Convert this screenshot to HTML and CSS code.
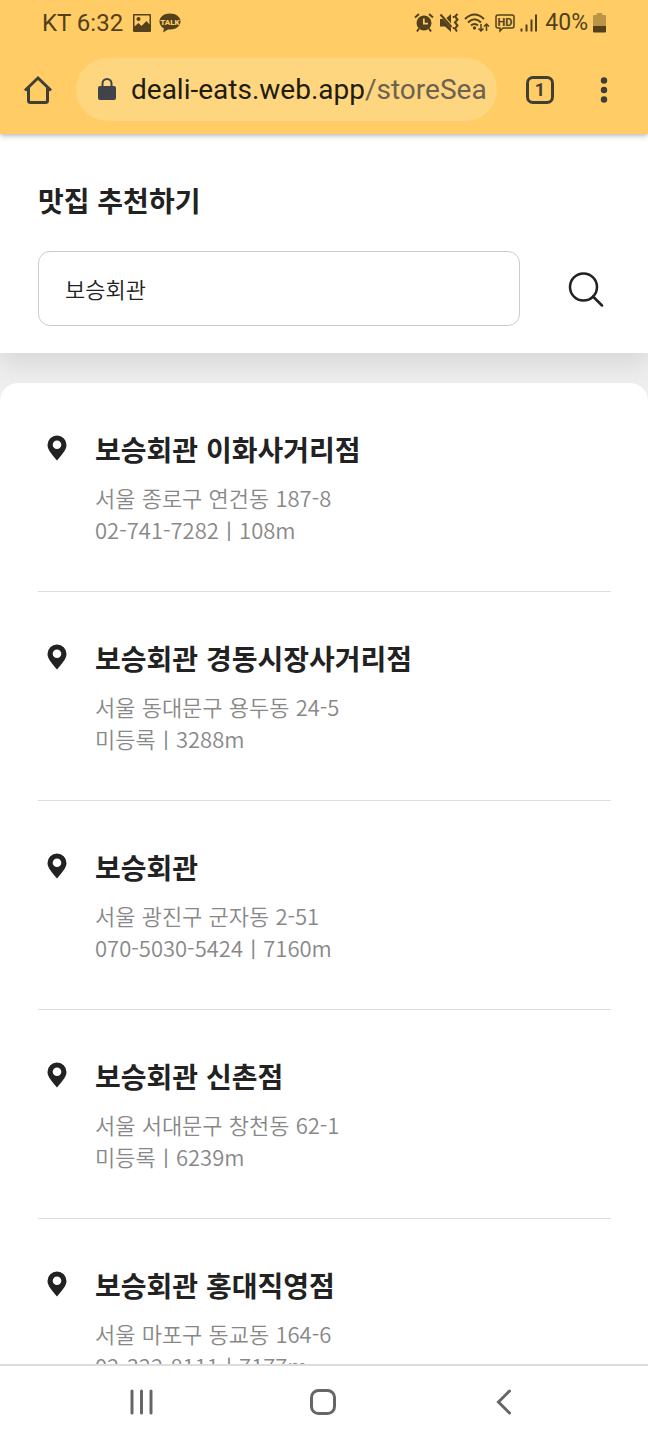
FILE: index.html
```html
<!DOCTYPE html>
<html lang="ko">
<head>
    <meta charset="UTF-8">
    <meta name="viewport" content="width=device-width, initial-scale=1.0">
    <title>맛집 추천하기</title>
    <link rel="stylesheet" href="styles.css">
</head>
<body>
<div class="screen">
    <div class="browser">
        <div class="status">
            <span class="clock">KT 6:32</span>
            <svg class="picture" width="20" height="20" viewBox="0 0 20 20">
                <path fill-rule="evenodd" d="M2 1h16a1 1 0 0 1 1 1v16a1 1 0 0 1-1 1H2a1 1 0 0 1-1-1V2a1 1 0 0 1 1-1zM2.500 2.500v11l4-3.500 3 3 5-5 3 3.500V2.500z"/>
                <circle cx="6.500" cy="6" r="2"/>
            </svg>
            <svg class="talk" width="22" height="20" viewBox="0 0 22 20">
                <path d="M11 0.500C5 0.500 0.500 4 0.500 8.500c0 3 1.800 5.500 4.500 6.900L4 19.500l5-3h2c6 0 10.500-3.500 10.500-8S17 0.500 11 0.500z"/>
                <text x="11" y="12" text-anchor="middle">TALK</text>
            </svg>
            <div class="status-right">
                <svg width="20" height="20" viewBox="0 0 20 20">
                    <path fill-rule="evenodd" d="M10 2.500a7.500 7.500 0 1 1 0 15a7.500 7.500 0 1 1 0-15zM9 5.500v6h5V9.800h-3.300V5.500z"/>
                    <path class="line" d="M1 4.500L5 1M19 4.500L15 1M5 15.500l-2 3M15 15.500l2 3"/>
                </svg>
                <svg width="20" height="20" viewBox="0 0 20 20">
                    <path d="M1 6h3l8 9v4l-6-5.500H1z"/>
                    <path d="M7.500 5L12 1v9.500z"/>
                    <path class="line" d="M1.500 1.500L12.500 14"/>
                    <path class="line" d="M18.500 1l-2.500 2.500 2.500 3-2.500 3 2.500 3-2.500 3 2 3"/>
                    <path class="thin" d="M14.500 3v2M14.500 14v2"/>
                </svg>
                <svg width="26" height="20" viewBox="0 0 26 20">
                    <path class="line" d="M1 6Q10.500-3 20 6M4 9.500Q10.500 3 17 9.500M7 12.500Q10.500 9.500 14 12.500"/>
                    <circle cx="10.500" cy="15" r="1.700"/>
                    <path class="thin" d="M17 11v7M14.500 15.500l2.500 2.500 2.500-2.500M22.500 18v-7M20 13.500l2.500-2.500 2.500 2.500"/>
                </svg>
                <svg class="hd" width="20" height="20" viewBox="0 0 20 20">
                    <path class="thin" d="M3 2h14q2 0 2 2v9q0 2-2 2H8l-3 3v-3H3q-2 0-2-2V4q0-2 2-2z"/>
                    <text x="10" y="13" text-anchor="middle">HD</text>
                </svg>
                <svg width="18" height="20" viewBox="0 0 18 20">
                    <path d="M0.500 15.500h2v3h-2zM5.500 11.500h2v7h-2zM10.500 6.500h2v12h-2zM15 1.500h2v17h-2z"/>
                </svg>
                <span class="percent">40%</span>
                <svg width="13" height="20" viewBox="0 0 14 20" preserveAspectRatio="none">
                    <path opacity="0.4" d="M4 0h6v2h3q1 0 1 1v10H0V3q0-1 1-1h3z"/>
                    <path d="M0 13h14v5.500q0 1-1 1H1q-1 0-1-1z"/>
                </svg>
            </div>
        </div>
        <div class="toolbar">
            <button class="home" aria-label="홈">
                <svg width="30" height="30" viewBox="0 0 30 30">
                    <path class="bold" d="M2 15.500L15 3 28 15.500M5.500 13v12.500q0 2 2 2h15q2 0 2-2V13"/>
                </svg>
            </button>
            <div class="address">
                <svg width="18" height="24" viewBox="0 0 18 24">
                    <rect x="0" y="8" width="18" height="14" rx="2"/>
                    <path class="lockline" d="M4.500 9V5.500a4.500 4.500 0 0 1 9 0v3.500"/>
                </svg>
                <span class="url">deali-eats.web.app<span class="path">/storeSea</span></span>
            </div>
            <button class="tabs" aria-label="탭"><span>1</span></button>
            <button class="menu" aria-label="메뉴">
                <svg width="8" height="28" viewBox="0 0 8 28">
                    <circle cx="4" cy="4.500" r="3.200"/>
                    <circle cx="4" cy="14" r="3.200"/>
                    <circle cx="4" cy="23.500" r="3.200"/>
                </svg>
            </button>
        </div>
    </div>

    <div class="content">
        <form class="search">
            <h1><label for="keyword">맛집 추천하기</label></h1>
            <div class="search-row">
                <input type="text" id="keyword" value="보승회관">
                <button type="button" aria-label="검색">
                    <svg width="36" height="36" viewBox="0 0 36 36">
                        <circle cx="15.500" cy="16" r="13.500"/>
                        <path d="M25 25.500l9 9"/>
                    </svg>
                </button>
            </div>
        </form>

        <ul class="stores">
            <li>
                <svg class="pin" viewBox="0 0 20 26"><path fill-rule="evenodd" d="M10 0.500a9.500 9.500 0 0 1 9.500 9.500c0 5-5 10-9.500 15.500C5.500 20 0.500 15 0.500 10A9.500 9.500 0 0 1 10 0.500zM10 5.500a4.300 4.300 0 1 0 0 8.600a4.300 4.300 0 1 0 0-8.600z"/></svg>
                <div>
                    <h2>보승회관 이화사거리점</h2>
                    <p>서울 종로구 연건동 187-8</p>
                    <p>02-741-7282ㅣ108m</p>
                </div>
            </li>
            <li>
                <svg class="pin" viewBox="0 0 20 26"><path fill-rule="evenodd" d="M10 0.500a9.500 9.500 0 0 1 9.500 9.500c0 5-5 10-9.500 15.500C5.500 20 0.500 15 0.500 10A9.500 9.500 0 0 1 10 0.500zM10 5.500a4.300 4.300 0 1 0 0 8.600a4.300 4.300 0 1 0 0-8.600z"/></svg>
                <div>
                    <h2>보승회관 경동시장사거리점</h2>
                    <p>서울 동대문구 용두동 24-5</p>
                    <p>미등록ㅣ3288m</p>
                </div>
            </li>
            <li>
                <svg class="pin" viewBox="0 0 20 26"><path fill-rule="evenodd" d="M10 0.500a9.500 9.500 0 0 1 9.500 9.500c0 5-5 10-9.500 15.500C5.500 20 0.500 15 0.500 10A9.500 9.500 0 0 1 10 0.500zM10 5.500a4.300 4.300 0 1 0 0 8.600a4.300 4.300 0 1 0 0-8.600z"/></svg>
                <div>
                    <h2>보승회관</h2>
                    <p>서울 광진구 군자동 2-51</p>
                    <p>070-5030-5424ㅣ7160m</p>
                </div>
            </li>
            <li>
                <svg class="pin" viewBox="0 0 20 26"><path fill-rule="evenodd" d="M10 0.500a9.500 9.500 0 0 1 9.500 9.500c0 5-5 10-9.500 15.500C5.500 20 0.500 15 0.500 10A9.500 9.500 0 0 1 10 0.500zM10 5.500a4.300 4.300 0 1 0 0 8.600a4.300 4.300 0 1 0 0-8.600z"/></svg>
                <div>
                    <h2>보승회관 신촌점</h2>
                    <p>서울 서대문구 창천동 62-1</p>
                    <p>미등록ㅣ6239m</p>
                </div>
            </li>
            <li>
                <svg class="pin" viewBox="0 0 20 26"><path fill-rule="evenodd" d="M10 0.500a9.500 9.500 0 0 1 9.500 9.500c0 5-5 10-9.500 15.500C5.500 20 0.500 15 0.500 10A9.500 9.500 0 0 1 10 0.500zM10 5.500a4.300 4.300 0 1 0 0 8.600a4.300 4.300 0 1 0 0-8.600z"/></svg>
                <div>
                    <h2>보승회관 홍대직영점</h2>
                    <p>서울 마포구 동교동 164-6</p>
                    <p>02-322-8111ㅣ7177m</p>
                </div>
            </li>
        </ul>
    </div>

    <div class="navbar">
        <button aria-label="최근 앱">
            <svg width="26" height="26" viewBox="0 0 26 26"><path d="M3 2v22M12.500 2v22M22 2v22"/></svg>
        </button>
        <button aria-label="홈 화면">
            <svg width="26" height="26" viewBox="0 0 26 26"><rect x="1.500" y="1.500" width="23" height="23" rx="7"/></svg>
        </button>
        <button aria-label="뒤로">
            <svg width="26" height="26" viewBox="0 0 26 26"><path d="M18.500 2L7.500 13l11 11"/></svg>
        </button>
    </div>
</div>
</body>
</html>
```
FILE: styles.css
```css
* {
    box-sizing: border-box;
}

body {
    margin: 0;
    font-family: "Noto Sans CJK KR", sans-serif;
    color: #222;
}

h1, h2, p, ul {
    margin: 0;
    padding: 0;
}

button {
    display: flex;
    align-items: center;
    justify-content: center;
    padding: 0;
    border: 0;
    background: none;
    color: inherit;
}

.screen {
    display: flex;
    flex-direction: column;
    height: 100vh;
}

/* browser bar */
.browser {
    position: relative;
    background-color: #ffcc66;
    font-family: Roboto, sans-serif;
    box-shadow: 0 1px 6px rgba(0, 0, 0, 0.35);
}

.status {
    display: flex;
    align-items: center;
    height: 45px;
    padding: 0 42px;
    font-size: 23px;
    color: #52411a;
    fill: #52411a;
}

.status .line,
.status .thin {
    fill: none;
    stroke: #52411a;
    stroke-width: 2;
}

.status .thin {
    stroke-width: 1.5;
}

.clock {
    font-size: 24px;
}

.picture {
    margin: 0 7px 0 9px;
}

.talk text {
    font-size: 8px;
    font-weight: 900;
    fill: #ffcc66;
}

.hd text {
    font-size: 11px;
    font-weight: 700;
}

.status-right {
    display: flex;
    align-items: center;
    gap: 5px;
    margin-left: auto;
}

.percent {
    margin-left: 2px;
}

.toolbar {
    display: flex;
    align-items: center;
    gap: 22px;
    height: 89px;
    padding: 0 23px 0 22px;
    color: #3f3f35;
    fill: #3f3f35;
}

.home {
    width: 32px;
    height: 42px;
}

.bold {
    fill: none;
    stroke: #3f3f35;
    stroke-width: 3;
}

.address {
    display: flex;
    flex: 1;
    align-items: center;
    gap: 15px;
    height: 63px;
    min-width: 0;
    padding: 0 8px 0 22px;
    border-radius: 32px;
    background-color: #ffd680;
}

.address svg {
    flex-shrink: 0;
    fill: #40444a;
}

.lockline {
    fill: none;
    stroke: #40444a;
    stroke-width: 2;
}

.url {
    font-size: 28px;
    color: #211b10;
    white-space: nowrap;
}

.path {
    color: #6c6250;
}

.tabs,
.menu {
    width: 42px;
    height: 42px;
    fill: #3f3f35;
}

.tabs span {
    width: 28px;
    height: 28px;
    border: 3px solid #3f3f35;
    border-radius: 7px;
    font: 700 18px/22px Roboto, sans-serif;
}

/* page */
.content {
    flex: 1;
    min-height: 0;
    overflow: hidden;
    background-color: #eee;
}

.search {
    padding: 45px 37px 27px 38px;
    background-color: #fff;
    box-shadow: 0 10px 24px rgba(0, 0, 0, 0.1);
}

.search h1,
.stores h2 {
    font-size: 28px;
    font-weight: 700;
    line-height: 42px;
}

.search-row {
    display: flex;
    align-items: center;
    gap: 41px;
    margin-top: 30px;
}

.search input {
    flex: 1;
    min-width: 0;
    height: 75px;
    padding: 0 26px 2px;
    border: 1px solid #ccc;
    border-radius: 12px;
    background-color: #fff;
    font-family: inherit;
    font-size: 22px;
    font-weight: 350;
    color: #222;
}

.search button {
    width: 50px;
    height: 50px;
}

.search svg {
    fill: none;
    stroke: #222;
    stroke-width: 2.5;
    stroke-linecap: round;
}

.stores {
    margin-top: 30px;
    padding: 0 37px 0 38px;
    border-radius: 18px 18px 0 0;
    background-color: #fff;
    list-style: none;
}

.stores li {
    display: flex;
    gap: 19px;
    padding: 45px 0 46px;
    border-bottom: 1px solid #ddd;
}

.stores p {
    font-size: 22px;
    font-weight: 350;
    line-height: 32px;
    color: #888;
}

.stores h2 {
    margin-bottom: 11px;
}

.pin {
    width: 38px;
    height: 26px;
    margin-top: 7px;
    fill: #222;
}

/* phone navigation */
.navbar {
    display: flex;
    justify-content: center;
    height: 76px;
    padding: 0 2px 3px 0;
    border-top: 2px solid #ddd;
    background-color: #fff;
}

.navbar button {
    width: 28%;
}

.navbar svg {
    fill: none;
    stroke: #666;
    stroke-width: 3;
    stroke-linecap: round;
}
```
